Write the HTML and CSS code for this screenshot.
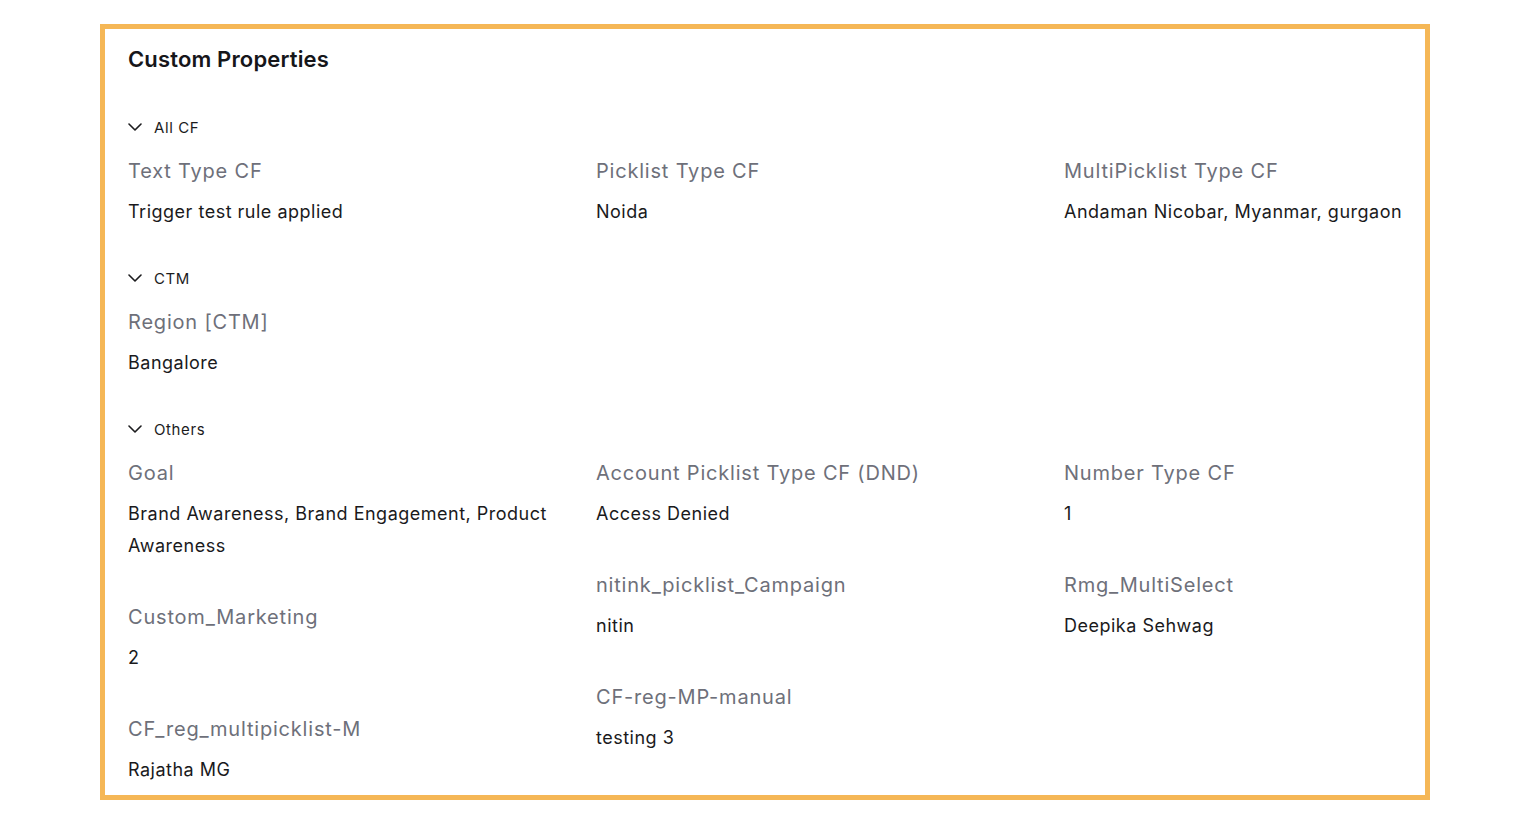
FILE: index.html
```html
<!DOCTYPE html>
<html>
<head>
<meta charset="utf-8">
<link rel="stylesheet" href="styles.css">
</head>
<body>
<div class="card">
  <h2 class="title">Custom Properties</h2>

  <section class="section">
    <div class="section-head">
      <svg class="chev" width="14" height="8" viewBox="0 0 14 8"><path d="M1 1 L7 7 L13 1" fill="none" stroke="#1c1c1e" stroke-width="1.6" stroke-linecap="round" stroke-linejoin="round"/></svg>
      <span>All CF</span>
    </div>
    <div class="grid">
      <div class="col">
        <div class="item"><div class="label">Text Type CF</div><div class="value">Trigger test rule applied</div></div>
      </div>
      <div class="col">
        <div class="item"><div class="label">Picklist Type CF</div><div class="value">Noida</div></div>
      </div>
      <div class="col">
        <div class="item"><div class="label">MultiPicklist Type CF</div><div class="value">Andaman Nicobar, Myanmar, gurgaon</div></div>
      </div>
    </div>
  </section>

  <section class="section">
    <div class="section-head">
      <svg class="chev" width="14" height="8" viewBox="0 0 14 8"><path d="M1 1 L7 7 L13 1" fill="none" stroke="#1c1c1e" stroke-width="1.6" stroke-linecap="round" stroke-linejoin="round"/></svg>
      <span>CTM</span>
    </div>
    <div class="grid">
      <div class="col">
        <div class="item"><div class="label">Region [CTM]</div><div class="value">Bangalore</div></div>
      </div>
      <div class="col"></div>
      <div class="col"></div>
    </div>
  </section>

  <section class="section">
    <div class="section-head">
      <svg class="chev" width="14" height="8" viewBox="0 0 14 8"><path d="M1 1 L7 7 L13 1" fill="none" stroke="#1c1c1e" stroke-width="1.6" stroke-linecap="round" stroke-linejoin="round"/></svg>
      <span>Others</span>
    </div>
    <div class="grid">
      <div class="col">
        <div class="item"><div class="label">Goal</div><div class="value">Brand Awareness, Brand Engagement, Product Awareness</div></div>
        <div class="item"><div class="label">Custom_Marketing</div><div class="value">2</div></div>
        <div class="item"><div class="label">CF_reg_multipicklist-M</div><div class="value">Rajatha MG</div></div>
      </div>
      <div class="col">
        <div class="item"><div class="label">Account Picklist Type CF (DND)</div><div class="value">Access Denied</div></div>
        <div class="item"><div class="label">nitink_picklist_Campaign</div><div class="value">nitin</div></div>
        <div class="item"><div class="label">CF-reg-MP-manual</div><div class="value">testing 3</div></div>
      </div>
      <div class="col">
        <div class="item"><div class="label">Number Type CF</div><div class="value">1</div></div>
        <div class="item"><div class="label">Rmg_MultiSelect</div><div class="value">Deepika Sehwag</div></div>
      </div>
    </div>
  </section>
</div>
</body>
</html>
```

FILE: styles.css
```css
* { box-sizing: border-box; }
html, body { margin: 0; background: #ffffff; }
body {
  padding: 24px 100px 0 100px;
  font-family: Inter, "Noto Sans", "Liberation Sans", sans-serif;
  color: #1c1c1e;
}
.card {
  border: 5px solid #f5b756;
  padding: 14px 8px 9px 23px;
}
.title {
  margin: 0 0 42px 0;
  font-size: 22px;
  line-height: 32px;
  font-weight: 600;
  letter-spacing: 0.15px;
  color: #16161a;
}
.section + .section { margin-top: 40px; }
.section-head {
  display: flex;
  align-items: center;
  gap: 12px;
  height: 20px;
  margin-bottom: 20px;
  font-size: 15px;
  letter-spacing: 0.6px;
  color: #1c1c1e;
}
.chev { flex: none; }
.grid {
  display: grid;
  grid-template-columns: 468px 468px minmax(0, 1fr);
}
.col {
  display: flex;
  flex-direction: column;
  gap: 41px;
  padding-right: 40px;
}
.col:last-child { padding-right: 0; }
.label {
  font-size: 20px;
  line-height: 28px;
  letter-spacing: 0.8px;
  color: #6e707a;
  margin-bottom: 11px;
}
.value {
  font-size: 18px;
  line-height: 32px;
  letter-spacing: 0.5px;
  color: #1a1a1c;
}
```
